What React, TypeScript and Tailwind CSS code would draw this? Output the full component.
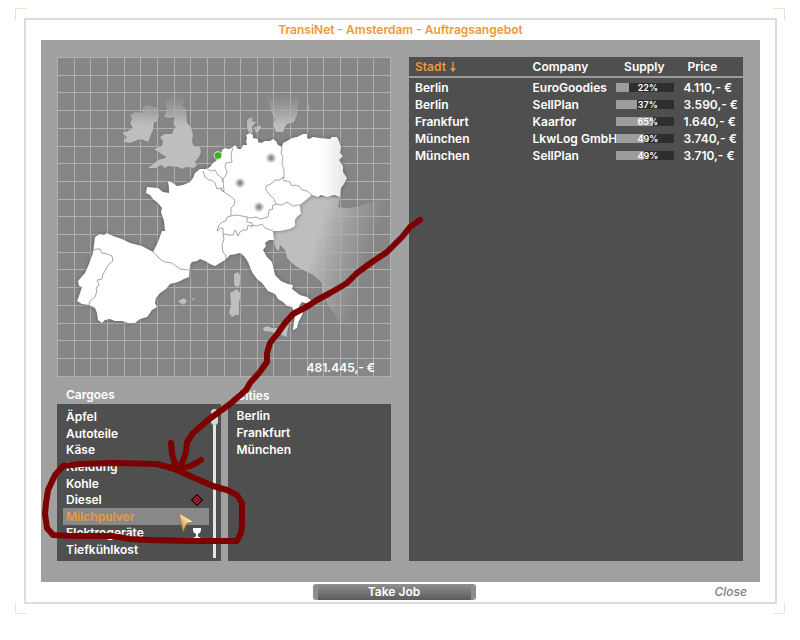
import { useState } from 'react';
import clsx from 'clsx';

interface Job {
  city: string;
  company: string;
  supply: number;
  price: string;
}

const jobs: Job[] = [
  { city: 'Berlin', company: 'EuroGoodies', supply: 22, price: '4.110,- €' },
  { city: 'Berlin', company: 'SellPlan', supply: 37, price: '3.590,- €' },
  { city: 'Frankfurt', company: 'Kaarfor', supply: 65, price: '1.640,- €' },
  { city: 'München', company: 'LkwLog GmbH', supply: 49, price: '3.740,- €' },
  { city: 'München', company: 'SellPlan', supply: 49, price: '3.710,- €' },
];

const cargoes = [
  'Äpfel',
  'Autoteile',
  'Käse',
  'Kleidung',
  'Kohle',
  'Diesel',
  'Milchpulver',
  'Elektrogeräte',
  'Tiefkühlkost',
];

const cities = ['Berlin', 'Frankfurt', 'München'];

// Map outlines
const mainland =
  'M193 178L195 173L200 169L206 169L210 167L213 163L217 160L221 156L222 150L225 148L229 149L233 147L235 145L238 149L241 149L243 145L247 145L246 141L247 138L246 135L250 133L253 135L253 138L258 139L258 142L261 143L265 141L270 141L273 139L276 141L278 145L282 147L283 143L287 141L292 138L297 137L303 134L307 134L307 138L309 139L313 137L320 138L330 139L332 137L337 137L339 141L341 147L340 153L343 156L339 160L343 166L343 172L347 178L344 184L341 188L340 197L334 195L327 197L321 195L318 197L312 195L306 200L300 205L301 214L298 216L295 220L295 226L290 229L280 231L273 231L274 240L269 240L265 243L266 246L263 250L267 257L272 262L275 275L281 281L288 284L293 285L292 289L300 295L307 297L312 301L309 304L302 302L299 306L301 311L303 313L298 323L297 328L293 330L294 322L295 316L292 307L287 306L283 302L278 299L275 294L268 291L262 283L257 279L252 272L248 262L244 256L240 253L236 254L230 255L225 260L220 263L215 266L210 264L205 261L200 259L197 261L192 262L190 265L189 277L184 279L178 282L170 284L166 289L160 293L156 298L155 303L157 307L152 310L150 313L147 317L140 319L135 323L128 323L122 321L115 321L110 319L105 320L102 323L98 320L97 313L95 308L89 305L82 304L77 301L79 296L82 287L79 286L78 281L85 273L89 264L93 253L95 237L100 234L104 235L107 233L113 236L122 239L130 243L142 246L153 252L158 242L162 231L165 231L164 221L161 212L162 208L158 203L153 199L150 195L146 193L147 187L158 188L163 192L169 193L169 188L168 181L173 183L177 186L183 185L190 182Z';

const borders = [
  'M233 148L231 154L232 162L226 163L225 167L227 171L226 175L223 179L224 192',
  'M207 169L211 171L215 170L218 175L222 178L223 182',
  'M203 171L205 177L209 180L212 180L215 183L217 189L220 188L224 192',
  'M222 187L221 190L224 192L230 196L235 200L234 205L231 208L231 216L237 215L242 216L247 217L247 222L252 223L252 227L248 225L247 230L243 230L240 232L238 236L236 231L235 230L233 235L230 235L223 234L223 228L221 228L217 231L219 225L222 222L226 221L227 217L231 216',
  'M223 234L224 239L222 245L223 252L226 256L226 259',
  'M247 217L250 218L256 217L260 219L268 217L269 210L273 209L272 206L276 204',
  'M252 225L257 226L262 224L265 228L273 231',
  'M266 186L271 184L275 180L280 180L283 177L284 181L289 181L292 186L295 185L299 186L302 190L307 191L312 195',
  'M266 186L266 190L270 195L274 199L276 204L282 205L287 202L290 204L293 206L298 205L300 205',
  'M282 147L281 153L283 157L282 163L284 170L284 178',
  'M153 252L160 259L165 262L172 263L180 269L189 270',
  'M93 250L97 249L100 249L102 253L107 254L112 256L113 261L108 265L105 271L103 274L102 279L97 280L99 285L96 288L97 291L95 297L90 301L89 305',
];

const greyLands = [
  // Great Britain
  'M165 104L167 98L185 95L184 102L182 105L186 109L187 123L191 127L193 135L192 142L194 146L200 147L201 152L199 157L195 162L197 165L194 168L186 167L182 169L178 167L168 166L165 168L161 165L156 168L148 168L153 164L158 160L165 158L166 157L160 153L154 149L162 146L163 141L160 137L165 134L172 134L174 129L176 127L173 123L175 117L170 118L164 117L167 109Z',
  // Ireland
  'M123 141L127 137L122 133L128 131L133 128L130 123L132 119L130 115L135 112L142 113L143 107L149 105L157 108L159 115L157 122L154 122L153 130L148 142L141 139L135 141L130 143L125 142Z',
  // Sweden
  'M266 93L300 93L298 108L297 115L294 122L287 124L285 127L283 132L276 132L273 124L275 120L272 113Z',
  'M309 102L310 106L308 112L306 109Z',
  // Denmark
  'M249 133L247 128L247 120L249 118L253 117L252 121L256 122L252 127L253 133Z',
  'M254 127L257 127L260 125L261 128L258 132L256 133Z',
  // Corsica, Sardinia
  'M234 274L238 272L240 275L240 284L238 288L234 285Z',
  'M230 293L237 289L241 294L239 303L239 315L236 315L232 317L229 313L231 304Z',
  // Balearics
  'M178 301L184 298L187 301L184 305L180 303Z',
  'M192 298L195 299L193 301Z',
  // Sicily
  'M263 328L267 326L272 328L280 328L289 325L287 333L287 337L279 334L272 332L264 331Z',
];

const balkans =
  'M300 205L312 195L318 197L327 196L340 197L338 207L347 208L357 207L370 202L391 200L391 330L350 330L338 320L328 305L322 294L322 283L313 275L305 271L297 267L292 263L287 258L285 250L280 245L279 251L276 249L274 243L273 231L295 226L295 220L301 214Z';

const cityDots = [
  [271, 158],
  [240, 183],
  [259, 207],
];

function EuropeMap() {
  return (
    <svg viewBox="57 57 334 320" className="block h-auto w-full" role="img" aria-label="Europe">
      <defs>
        <linearGradient id="north" gradientUnits="userSpaceOnUse" x1="0" y1="94" x2="0" y2="125">
          <stop offset="0" stopColor="#bebebe" stopOpacity="0" />
          <stop offset="1" stopColor="#bebebe" />
        </linearGradient>
        <linearGradient id="east" gradientUnits="userSpaceOnUse" x1="320" y1="225" x2="376" y2="242">
          <stop offset="0" stopColor="#bebebe" />
          <stop offset="1" stopColor="#bebebe" stopOpacity="0" />
        </linearGradient>
        <linearGradient id="land" gradientUnits="userSpaceOnUse" x1="322" y1="0" x2="350" y2="0">
          <stop offset="0" stopColor="#ffffff" />
          <stop offset="1" stopColor="#e0e0e0" />
        </linearGradient>
        <radialGradient id="dot">
          <stop offset="0.2" stopColor="#888888" />
          <stop offset="1" stopColor="#888888" stopOpacity="0" />
        </radialGradient>
        <filter id="shade" x="-10%" y="-10%" width="120%" height="120%" colorInterpolationFilters="sRGB">
          <feDropShadow dx="0" dy="0" stdDeviation="2" floodColor="#505050" floodOpacity="0.7" />
        </filter>
        <filter id="shade-light" x="-10%" y="-10%" width="120%" height="120%" colorInterpolationFilters="sRGB">
          <feDropShadow dx="0" dy="0" stdDeviation="1" floodColor="#606060" floodOpacity="0.45" />
        </filter>
      </defs>
      <rect x="57" y="57" width="334" height="320" fill="#868686" />
      <g stroke="#b0b0b0" strokeWidth="1">
        {Array.from({ length: 21 }, (_, i) => (
          <path key={i} d={`M${57.5 + Math.round(i * 16.65)} 57V377`} />
        ))}
        {Array.from({ length: 19 }, (_, i) => (
          <path key={i} d={`M57 ${57.5 + Math.round(i * 17.7)}H391`} />
        ))}
      </g>
      <g filter="url(#shade-light)">
        {greyLands.map((d) => (
          <path key={d} d={d} fill="url(#north)" />
        ))}
        <path d={balkans} fill="url(#east)" />
      </g>
      <path d={mainland} fill="url(#land)" filter="url(#shade)" />
      {borders.map((d) => (
        <path key={d} d={d} fill="none" stroke="#808080" strokeWidth="0.7" />
      ))}
      {cityDots.map(([x, y]) => (
        <circle key={x} cx={x} cy={y} r="5.5" fill="url(#dot)" />
      ))}
      <circle cx="218" cy="155.5" r="4.2" fill="#d8f5d0" />
      <circle cx="218" cy="155.5" r="3.3" fill="#3cab1e" />
    </svg>
  );
}

function DiamondIcon() {
  return (
    <svg viewBox="0 0 12 12" className="size-3" aria-hidden="true">
      <path d="M6 0.7L11.3 6L6 11.3L0.7 6Z" fill="#c01838" stroke="#1d0508" strokeWidth="1.2" />
      <path d="M6 3.4L8.6 6L6 8.6L3.4 6Z" fill="#5c0a18" />
      <circle cx="6" cy="6.2" r="0.9" fill="#d8405a" />
    </svg>
  );
}

function GlassIcon() {
  return (
    <svg viewBox="0 0 12 12" className="size-3" aria-hidden="true">
      <path d="M2 1H10C10.2 4.2 9.4 6.3 6.9 6.8V9.6L9.4 10.6V11.5H2.6V10.6L5.1 9.6V6.8C2.6 6.3 1.8 4.2 2 1Z" fill="#ffffff" />
    </svg>
  );
}

// Hand-drawn marks and the mouse pointer, over everything else
function Marks() {
  return (
    <svg viewBox="0 0 800 640" className="pointer-events-none absolute top-0 left-0 h-[640px] w-[800px]" aria-hidden="true">
      <defs>
        <linearGradient id="pointer" x1="0" y1="1" x2="1" y2="0">
          <stop offset="0.2" stopColor="#e0902c" />
          <stop offset="0.6" stopColor="#f8e0b0" />
        </linearGradient>
      </defs>
      <path d="M179 513L194 522L187 523L183 532Z" fill="url(#pointer)" stroke="#8a6a3a" strokeWidth="0.6" />
      <g fill="none" stroke="#7d0000" strokeWidth="6" strokeLinecap="round" strokeLinejoin="round">
        <path d="M420 220L410 227L402 237L392 247L387 252L372 262L357 273L347 283L337 289L330 293L317 300L308 306L293 314L285 323L278 333L270 343L267 353L267 362L259 373L250 383L246 390L230 404L208 420L193 433L187 442L186 452L183 461L178 469" />
        <path d="M171 443L172 454L177 470L190 466L196 463L201 460" />
        <path d="M178 470L157 464L113 463L80 464L63 466L55 475L48 490L46 503L45 514L47 528L53 535L73 536L112 536L130 539L150 540L190 541L237 541L241 533L242 524L242 503L237 495L227 490L213 486L190 476L170 467" />
      </g>
    </svg>
  );
}

export default function App() {
  const [cargo, setCargo] = useState('Milchpulver');

  return (
    <div className="relative min-h-screen bg-white px-[15px] pt-2 pb-6 font-['Inter','Liberation_Sans',sans-serif] text-[12px] font-semibold text-white">
      <div className="relative pt-[10px] pr-2 pb-[10px] pl-[9px]">
        {/* Corner brackets */}
        <span className="absolute top-0 left-0 size-3 border-t border-l border-[#eee2cc]" />
        <span className="absolute top-0 right-0 size-3 border-t border-r border-[#eee2cc]" />
        <span className="absolute bottom-0 left-0 size-3 border-b border-l border-[#ece6cc]" />
        <span className="absolute right-0 bottom-0 size-3 border-r border-b border-[#ece6cc]" />

        <main className="border-2 border-[#dcdcdc] px-[15px]">
          <h1 className="text-center leading-5 text-[#ec9a3a]">TransiNet - Amsterdam - Auftragsangebot</h1>

          <div className="flex gap-[18px] bg-[#a0a0a0] pt-[17px] pr-[17px] pb-[21px] pl-4">
            <div className="min-w-0 flex-1">
              <div className="relative">
                <EuropeMap />
                <div className="absolute right-4 bottom-0 leading-[18px]">481.445,- €</div>
              </div>

              <div className="flex gap-[7px]">
                <section className="min-w-0 flex-1">
                  <h2 className="flex h-[27px] items-end pl-[9px] leading-[18px]">Cargoes</h2>
                  <div className="flex h-[157px] bg-[#4f4f4f] pt-[5px] pr-[3px] pb-[3px] pl-1.5">
                    <ul className="flex min-w-0 flex-1 flex-col">
                      {cargoes.map((name) => (
                        <li key={name} className="flex min-h-0 flex-1">
                          <button
                            type="button"
                            onClick={() => setCargo(name)}
                            className={clsx(
                              'flex flex-1 items-center justify-between pr-1.5 pl-[3px] text-left leading-4',
                              name === cargo && 'bg-[#888888] text-[#ec9a3a]'
                            )}
                          >
                            {name}
                            {name === 'Diesel' && <DiamondIcon />}
                            {name === 'Elektrogeräte' && <GlassIcon />}
                          </button>
                        </li>
                      ))}
                    </ul>
                    <div className="ml-0.5 flex w-[7px] flex-col items-center">
                      <div className="h-4 w-[7px] rounded-full bg-[#d8d8d8]" />
                      <div className="w-[3px] flex-1 bg-[#e4e4e4]" />
                    </div>
                  </div>
                </section>

                <section className="min-w-0 flex-1">
                  <h2 className="flex h-[27px] items-end pl-[9px] leading-4">Cities</h2>
                  <ul className="h-[157px] bg-[#4f4f4f] py-[3px] pl-[9px] leading-[17px]">
                    {cities.map((city) => (
                      <li key={city}>{city}</li>
                    ))}
                  </ul>
                </section>
              </div>
            </div>

            <div className="min-w-0 flex-1 bg-[#4f4f4f]">
              <table className="w-full table-fixed border-collapse text-left leading-[17px]">
                <colgroup>
                  <col className="w-[37%]" />
                  <col className="w-[25%]" />
                  <col className="w-[19%]" />
                  <col className="w-[19%]" />
                </colgroup>
                <thead>
                  <tr className="h-5 border-b-2 border-[#9a9a9a]">
                    <th className="p-0 pl-1.5 font-semibold text-[#ec9a3a]">
                      <button type="button" className="flex items-center gap-1">
                        Stadt
                        <svg viewBox="0 0 6 10" className="h-[10px] w-1.5" aria-hidden="true">
                          <path d="M3 0V9M0.8 6.2L3 9L5.2 6.2" fill="none" stroke="currentColor" strokeWidth="1.3" />
                        </svg>
                      </button>
                    </th>
                    <th className="p-0 font-semibold">Company</th>
                    <th className="p-0 pl-2 font-semibold">Supply</th>
                    <th className="p-0 pl-2 font-semibold">Price</th>
                  </tr>
                </thead>
                <tbody className="before:block before:h-px">
                  {jobs.map((job) => (
                    <tr key={job.city + job.company} className="h-[17px]">
                      <td className="p-0 pl-1.5">{job.city}</td>
                      <td className="p-0 whitespace-nowrap">{job.company}</td>
                      <td className="p-0 pr-1.5">
                        <div className="relative h-[9px] bg-[#2e2e2e]">
                          <div className="h-full bg-[#9c9c9c]" style={{ width: `${job.supply}%` }} />
                          <span className="absolute inset-0 pl-1.5 text-center text-[9px] leading-[9px]">{job.supply}%</span>
                        </div>
                      </td>
                      <td className="p-0 pl-1 whitespace-nowrap">{job.price}</td>
                    </tr>
                  ))}
                </tbody>
              </table>
            </div>
          </div>

          <div className="grid h-5 grid-cols-[1fr_163px_1fr] items-center pr-[13px]">
            <button
              type="button"
              className="col-start-2 h-4 rounded-[3px] border-x-[5px] border-[#8e8e8e] bg-linear-to-b from-[#909090] to-[#5c5c5c] leading-4"
            >
              Take Job
            </button>
            <button type="button" className="justify-self-end font-medium text-[#7c7c7c] italic">
              Close
            </button>
          </div>
        </main>
      </div>
      <Marks />
    </div>
  );
}
